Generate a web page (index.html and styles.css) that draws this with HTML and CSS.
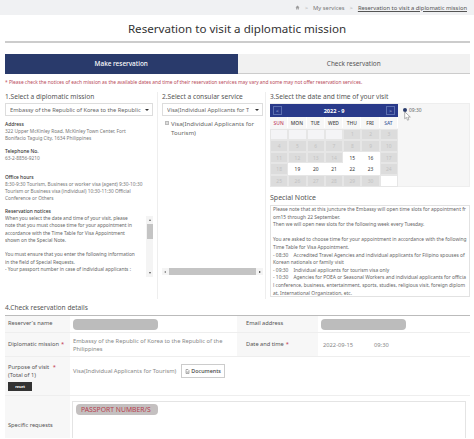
FILE: index.html
```html
<!DOCTYPE html>
<html lang="en">
<head>
<meta charset="utf-8">
<title>Reservation to visit a diplomatic mission</title>
<link rel="stylesheet" href="styles.css">
</head>
<body>
<nav class="crumbs">
  <svg class="home" viewBox="0 0 10 10" width="5" height="5"><path d="M5 1 1 5h1.4v4h2V6.500h1.200V9h2V5H9z" fill="#9a9a9a"/></svg>
  <span class="sep">&gt;</span><span>My services</span><span class="sep">&gt;</span><u>Reservation to visit a diplomatic mission</u>
</nav>
<h1 class="title">Reservation to visit a diplomatic mission</h1>
<main class="wrap">
  <div class="tabs">
    <div class="tab active">Make reservation</div>
    <div class="tab">Check reservation</div>
  </div>
  <p class="alert">* Please check the notices of each mission as the available dates and time of their reservation services may vary and some may not offer reservation services.</p>
  <div class="cols">
    <section class="col col1">
      <h2 class="step">1.Select a diplomatic mission</h2>
      <div class="select"><span class="select-text">Embassy of the Republic of Korea to the Republic</span><i class="caret"></i></div>
      <h3 class="info-h first">Address</h3>
      <p class="info">322 Upper McKinley Road, McKinley Town Center, Fort Bonifacio Taguig City, 1634 Philippines</p>
      <h3 class="info-h">Telephone No.</h3>
      <p class="info">63-2-8856-9210</p>
      <h3 class="info-h hours">Office hours</h3>
      <p class="info">8:30-9:30 Tourism, Business or worker visa (agent) 9:30-10:30 Tourism or Business visa (individual) 10:30-11:30 Official Conference or Others</p>
      <h3 class="info-h">Reservation notices</h3>
      <div class="notice-box">
        <div class="notice-text">When you select the date and time of your visit, please note that you must choose time for your appointment in accordance with the Time Table for Visa Appointment shown on the Special Note.<br><br>You must ensure that you enter the following information in the field of Special Requests.<br>- Your passport number in case of individual applicants :</div>
        <div class="vbar"><i class="up"></i><b></b><i class="down"></i></div>
      </div>
    </section>
    <section class="col col2">
      <h2 class="step">2.Select a consular service</h2>
      <div class="select"><span class="select-text">Visa(Individual Applicants for T</span><i class="caret"></i></div>
      <div class="check-list">
        <label class="check"><i class="box"></i><span>Visa(Individual Applicants for Tourism)</span></label>
      </div>
      <div class="hbar"><i class="left"></i><b></b><i class="right"></i></div>
    </section>
    <section class="col3">
      <h2 class="step">3.Select the date and time of your visit</h2>
      <div class="picker">
        <div class="cal">
          <div class="cal-head"><span class="nav">&lt;</span><strong>2022 - 9</strong><span class="nav">&gt;</span></div>
          <div class="cal-grid">
            <div class="dow sun">SUN</div><div class="dow">MON</div><div class="dow">TUE</div><div class="dow">WED</div><div class="dow">THU</div><div class="dow">FRI</div><div class="dow sat">SAT</div>
            <div class="blank"></div><div class="blank"></div><div class="blank"></div><div class="blank"></div><div class="off">1</div><div class="off">2</div><div class="off">3</div>
            <div class="off">4</div><div class="off">5</div><div class="off">6</div><div class="off">7</div><div class="off">8</div><div class="off">9</div><div class="off">10</div>
            <div class="off">11</div><div class="off">12</div><div class="off">13</div><div class="off">14</div><div class="on">15</div><div class="on">16</div><div class="off">17</div>
            <div class="off">18</div><div class="on">19</div><div class="on">20</div><div class="on">21</div><div class="on">22</div><div class="on">23</div><div class="off">24</div>
            <div class="off">25</div><div class="off">26</div><div class="off">27</div><div class="off">28</div><div class="off">29</div><div class="off">30</div><div class="blank white"></div>
          </div>
        </div>
        <div class="times">
          <span class="radio"></span><span>09:30</span>
          <svg class="cursor" viewBox="0 0 10 14" width="7" height="10"><path d="M1 1v10l2.500-2 1.500 4 2-.8-1.500-3.700H9z" fill="#fff" stroke="#777" stroke-width=".8"/></svg>
        </div>
      </div>
      <h2 class="special-h">Special Notice</h2>
      <div class="special">Please note that at this juncture the Embassy will open time slots for appointment from15 through 22 September.<br>Then we will open new slots for the following week every Tuesday.<br><br>You are asked to choose time for your appointment in accordance with the following Time Table for Visa Appointment.<br>- 08:30 &nbsp; &nbsp;Accredited Travel Agencies and individual applicants for Filipino spouses of Korean nationals or family visit<br>- 09:30 &nbsp; &nbsp;Individual applicants for tourism visa only<br>- 10:30 &nbsp; &nbsp;Agencies for POEA or Seasonal Workers and individual applicants for official conference, business, entertainment, sports, studies, religious visit, foreign diplomat, International Organization, etc.</div>
    </section>
  </div>
  <h2 class="step step4">4.Check reservation details</h2>
  <div class="details">
    <div class="lab">Reserver`s name</div>
    <div class="val"><span class="redact"></span></div>
    <div class="lab lab2">Email address</div>
    <div class="val"><span class="redact"></span></div>
    <div class="lab">Diplomatic mission <em>*</em></div>
    <div class="val">Embassy of the Republic of Korea to the Republic of the Philippines</div>
    <div class="lab lab2">Date and time <em>*</em></div>
    <div class="val datetime"><span>2022-09-15</span><span>09:30</span></div>
    <div class="lab lab-top">Purpose of visit <em>*</em><br>(Total of 1)<button class="reset">reset</button></div>
    <div class="val wide purpose"><span>Visa(Individual Applicants for Tourism)</span><button class="docs"><svg viewBox="0 0 10 10" width="5" height="5"><path d="M2 1h4l2 2v6H2zM3.500 5v1.500h3V5" fill="none" stroke="#666"/></svg>Documents</button></div>
    <div class="lab lab-req">Specific requests</div>
    <div class="val wide req"><div class="textarea"><span class="passport">PASSPORT NUMBER/S</span></div></div>
  </div>
</main>
</body>
</html>
```
FILE: styles.css
```css
* { box-sizing: border-box; }
html, body { margin: 0; height: 439px; overflow: hidden; }
body { font-family: "Noto Sans", "Liberation Sans", sans-serif; color: #555; background: #fff; }
h1, h2, h3, p { margin: 0; font-weight: 400; }

.crumbs { height: 15px; background: #f0f1f3; display: flex; justify-content: flex-end; align-items: center; gap: 5px; padding-right: 7px; font-size: 5.800px; color: #777; }
.crumbs u { color: #555; }
.sep { color: #aaa; }
.title { height: 26px; text-align: center; font-size: 11.600px; line-height: 28px; color: #333; }
.wrap { margin: 0 4px 0 5px; border-top: 2px solid #ccc; padding-top: 11px; }

.tabs { display: flex; height: 20px; }
.tab { flex: 1; background: #f1f1f1; border-bottom: 1px solid #ccc; text-align: center; font-size: 6.400px; line-height: 19px; color: #555; }
.tab.active { background: #293a6b; border-bottom: 0; color: #fff; font-weight: 500; }

.alert { margin-top: 4px; font-size: 4.850px; line-height: 9px; color: #b94a5a; white-space: nowrap; }

.cols { display: flex; margin-top: 5px; height: 207px; }
.col { height: 100%; border-right: 1px solid #eee; }
.col1 { width: 153px; padding-right: 4px; }
.col2 { width: 108px; padding: 0 2px 0 4px; }
.col3 { flex: 1; padding-left: 4px; }
.step { font-size: 6.600px; line-height: 9px; color: #555; white-space: nowrap; }

.select { height: 13px; margin-top: 2px; border: 1px solid #ddd; display: flex; align-items: center; justify-content: space-between; padding: 0 3px 0 4px; font-size: 5.700px; color: #666; }
.select-text { white-space: nowrap; overflow: hidden; }
.caret { flex: none; margin-left: 2px; border: 2px solid transparent; border-top: 2.500px solid #333; border-bottom: 0; }

.info-h { font-size: 4.900px; line-height: 7px; color: #333; font-weight: 500; margin-top: 6px; }
.info-h.first { margin-top: 5px; }
.info-h.hours { margin-top: 12px; }
.info { max-width: 142.500px; font-size: 4.800px; line-height: 7px; color: #777; }
.notice-box { display: flex; height: 62px; overflow: hidden; }
.notice-text { flex: 1; font-size: 4.800px; line-height: 7.300px; color: #666; padding-right: 9px; }
.vbar { flex: none; width: 7px; margin-left: 2px; margin-top: 1px; display: flex; flex-direction: column; align-items: center; background: #f4f4f4; }
.vbar b { width: 6px; height: 15px; margin-top: 3px; background: #c4c4c4; }
.vbar .up { margin-top: 3px; border: 1.500px solid transparent; border-bottom: 2px solid #666; border-top: 0; }
.vbar .down { margin-top: auto; margin-bottom: 3px; border: 1.500px solid transparent; border-top: 2px solid #555; border-bottom: 0; }

.check-list { height: 152px; padding-top: 3px; }
.check { display: flex; gap: 2px; font-size: 6.100px; line-height: 9px; color: #666; padding-left: 3px; }
.box { flex: none; width: 4px; height: 4px; margin-top: 2px; background: #ddd; border: 1px solid #bbb; }
.hbar { height: 7px; display: flex; align-items: center; background: #f4f4f4; }
.hbar b { flex: 1; height: 7px; margin: 0 3px; background: #c4c4c4; }
.hbar .left { margin-left: 2px; border: 1.500px solid transparent; border-right: 2px solid #777; border-left: 0; }
.hbar .right { margin-right: 2px; border: 1.500px solid transparent; border-left: 2px solid #333; border-right: 0; }

.picker { display: flex; height: 84px; margin-top: 2px; background: #f6f6f6; border: 1px solid #eee; border-left: 0; }
.cal { width: 128px; flex: none; }
.cal-head { height: 13px; background: #293a8a; display: flex; align-items: center; justify-content: space-between; padding: 0 3px; color: #fff; font-size: 5.600px; }
.cal-head strong { font-weight: 700; }
.nav { width: 9px; height: 9px; border: 1px solid #5c6fb0; color: #b9c4e6; display: flex; align-items: center; justify-content: center; font-size: 5px; }
.cal-grid { display: grid; grid-template-columns: repeat(7, 1fr); grid-auto-rows: 11.600px; gap: 0; }
.cal-grid > div { display: flex; align-items: center; justify-content: center; font-size: 4.900px; color: #444; }
.cal-grid .dow { background: #f7f7f7; font-weight: 500; color: #444; height: 11px; border-right: 1px solid #fff; }
.cal-grid .dow.sun { color: #c0395b; }
.cal-grid .dow.sat { color: #3a5a9a; }
.cal-grid .off { background: #dcdcdc; color: #c2c2c2; border: 0.500px solid #e6e6e6; }
.cal-grid .blank { background: #f4f4f6; border: 0.500px solid #e6e6e6; }
.cal-grid .blank.white { background: #fff; }
.cal-grid .on { background: #fff; color: #333; }
.times { position: relative; flex: 1; display: flex; gap: 2px; padding: 3px 0 0 5px; font-size: 4.900px; color: #666; line-height: 7px; }
.radio { width: 4px; height: 4px; margin-top: 1px; border-radius: 50%; background: #293a6b; }
.cursor { position: absolute; left: 6px; top: 7px; }

.special-h { margin-top: 6px; font-size: 7px; line-height: 10px; color: #555; }
.special { height: 92px; margin-top: 2px; border: 1px solid #e2e2e2; padding: 0 2px 0 2px; font-size: 4.900px; line-height: 7.600px; color: #666; overflow: hidden; word-break: break-all; }

.step4 { margin-top: 4px; line-height: 10px; }
.details { margin-top: 2px; border-top: 1px solid #bbb; display: grid; grid-template-columns: 65px 167px 81px 1fr; grid-template-rows: 17px 24px 39px 42px; }
.lab { background: #f7f7f7; border-bottom: 1px solid #eee; padding-left: 3px; font-size: 5.700px; line-height: 7.600px; color: #555; display: flex; align-items: center; }
.lab em { color: #c0304a; font-style: normal; margin-left: 2px; }
.lab2 { padding-left: 9px; }
.lab-top { display: block; padding-top: 7px; }
.lab-req { padding-top: 17px; border-bottom: 0; }
.val { border-bottom: 1px solid #eee; padding: 0 6px 0 3px; font-size: 5.750px; line-height: 8px; color: #888; display: flex; align-items: center; }
.redact { width: 85px; height: 11px; border-radius: 4px; background: #bcbcbc; }
.datetime { gap: 21px; padding-left: 5px; }
.wide { grid-column: 2 / 5; }
.purpose { gap: 5px; align-items: flex-start; padding-top: 7px; }
.purpose > span { line-height: 14px; }
.docs { height: 14px; display: flex; align-items: center; gap: 1px; padding: 0 3px; background: #fff; border: 1px solid #ccc; font: 500 5.400px "Noto Sans", sans-serif; color: #444; }
.reset { display: block; margin-top: 3px; width: 24px; height: 9px; padding: 0; background: #333; border: 0; color: #fff; font: 700 3.800px/9px "Noto Sans", sans-serif; }
.req { align-items: flex-start; padding: 5px 4px 0 2px; border-bottom: 0; }
.textarea { width: 100%; height: 37px; border: 1px solid #e4e4e4; border-bottom: 0; padding: 2px 3px; }
.passport { display: inline-block; height: 11px; padding: 0 7px 0 5px; border-radius: 4px; background: #c4c0c0; font-size: 6.800px; line-height: 11px; color: #b8404f; white-space: nowrap; }
```
